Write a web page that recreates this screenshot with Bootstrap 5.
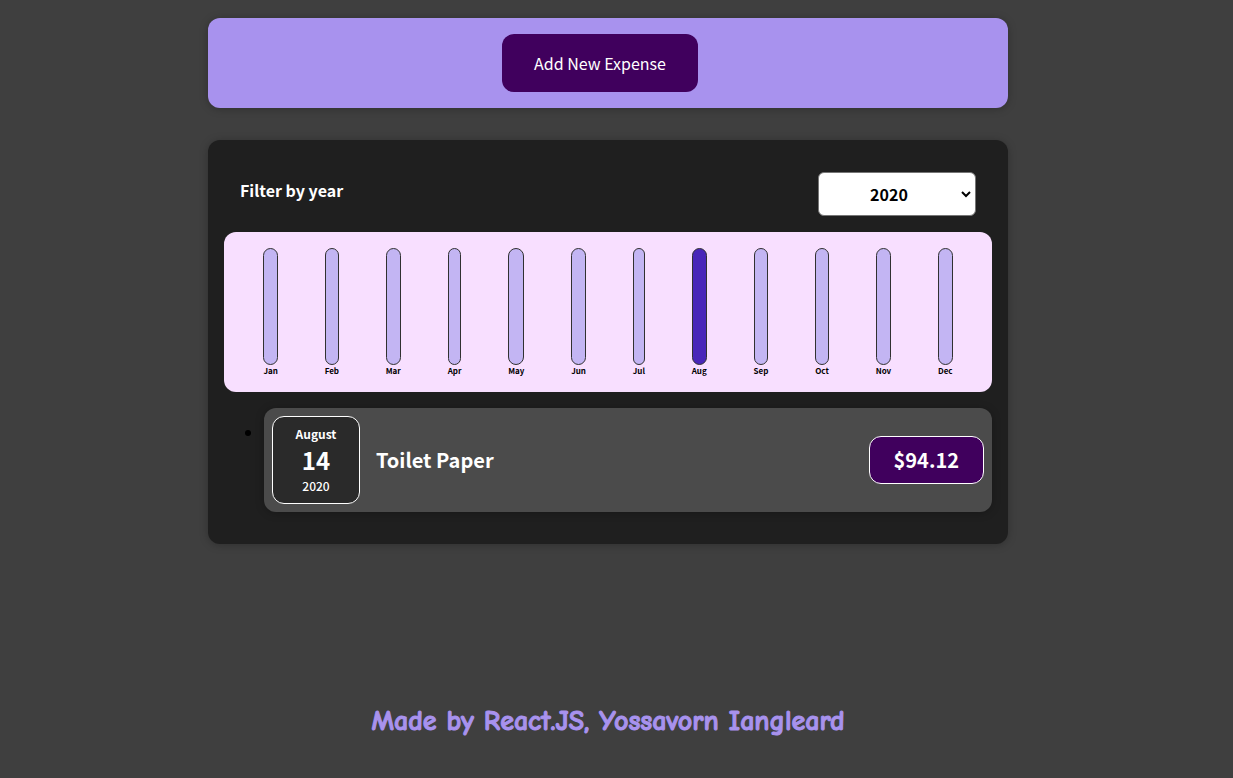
<!DOCTYPE html>
<html lang="en">
<head>
<meta charset="utf-8">
<meta name="viewport" content="width=device-width, initial-scale=1">
<title>Expenses</title>
<link href="https://cdn.jsdelivr.net/npm/bootstrap@5.3.0/dist/css/bootstrap.min.css" rel="stylesheet">
<style>
  body {
    background: #3f3f3f;
    font-family: "Noto Sans CJK JP", "Noto Sans", sans-serif;
    color: #fff;
    padding: 18px 17px 0 0;
  }
  .panel {
    width: 800px;
    max-width: 95%;
    border-radius: 12px;
    box-shadow: 0 1px 8px rgba(0, 0, 0, .25);
  }
  .new-expense { background: #a892ee; }
  .expenses { background: #1f1f1f; margin-top: 32px; }
  .btn-add {
    --bs-btn-color: #fff;
    --bs-btn-bg: #40005d;
    --bs-btn-border-width: 0;
    --bs-btn-hover-color: #fff;
    --bs-btn-hover-bg: #510674;
    --bs-btn-padding-x: 32px;
    --bs-btn-padding-y: 16px;
    --bs-btn-font-size: 16px;
    --bs-btn-border-radius: 12px;
    line-height: 26px;
  }
  .filter-label { font-size: 16px; line-height: 26px; font-weight: 700; }
  .year-select {
    width: 158px;
    height: 44px;
    padding: 8px 16px 8px 0;
    border: 1px solid #767676;
    border-radius: 6px;
    font-size: 16px;
    line-height: 26px;
    font-weight: 700;
    text-align: center;
    text-align-last: center;
    color: #000;
    background: #fff url("data:image/svg+xml,%3Csvg xmlns='http://www.w3.org/2000/svg' viewBox='0 0 10 7'%3E%3Cpath d='M1 1l4 4 4-4' fill='none' stroke='%23000' stroke-width='2'/%3E%3C/svg%3E") no-repeat right 4px center / 10px 7px;
  }
  .chart { background: #f8dfff; border-radius: 12px; height: 160px; }
  .month { font-size: 8px; line-height: 11px; font-weight: 700; color: #000; }
  .bar { background: #c3b5f3; border: 1px solid #313131; border-radius: 12px; }
  .bar-full { background: #4826b9; }
  .expense-list { padding-left: 40px; color: #000; }
  .expense-item {
    background: #4b4b4b;
    border-radius: 12px;
    box-shadow: 0 1px 8px rgba(0, 0, 0, .25);
    color: #fff;
  }
  .date-box {
    width: 88px;
    height: 88px;
    background: #2a2a2a;
    border: 1px solid #fff;
    border-radius: 12px;
    font-size: 12px;
    line-height: 20px;
  }
  .date-day { font-size: 24px; line-height: 32px; }
  .item-title { font-size: 20px; line-height: 32px; font-weight: 700; }
  .price {
    background: #40005d;
    border: 1px solid #fff;
    border-radius: 12px;
    padding: 7px 24px;
    font-size: 20px;
    line-height: 32px;
    font-weight: 700;
  }
  .credit {
    font-family: "Comic Sans MS", "Comic Neue", "DejaVu Sans", sans-serif;
    font-size: 28px;
    line-height: 34px;
    font-weight: 700;
    -webkit-text-stroke: 1px #a892ee;
    color: #a892ee;
    margin-top: 160px;
  }
</style>
</head>
<body>
<section class="panel new-expense mx-auto p-3 text-center">
  <button type="button" class="btn btn-add me-3">Add New Expense</button>
</section>

<main class="panel expenses mx-auto p-3">
  <div class="d-flex justify-content-between align-items-center px-3 pt-3">
    <label class="filter-label mb-2" for="year">Filter by year</label>
    <select id="year" class="year-select form-select">
      <option>2022</option><option>2021</option><option selected>2020</option><option>2019</option>
    </select>
  </div>

  <div class="chart d-flex justify-content-around p-3 mt-3">
    <div class="month d-flex flex-column align-items-center"><div class="bar w-100 flex-grow-1"></div>Jan</div>
    <div class="month d-flex flex-column align-items-center"><div class="bar w-100 flex-grow-1"></div>Feb</div>
    <div class="month d-flex flex-column align-items-center"><div class="bar w-100 flex-grow-1"></div>Mar</div>
    <div class="month d-flex flex-column align-items-center"><div class="bar w-100 flex-grow-1"></div>Apr</div>
    <div class="month d-flex flex-column align-items-center"><div class="bar w-100 flex-grow-1"></div>May</div>
    <div class="month d-flex flex-column align-items-center"><div class="bar w-100 flex-grow-1"></div>Jun</div>
    <div class="month d-flex flex-column align-items-center"><div class="bar w-100 flex-grow-1"></div>Jul</div>
    <div class="month d-flex flex-column align-items-center"><div class="bar bar-full w-100 flex-grow-1"></div>Aug</div>
    <div class="month d-flex flex-column align-items-center"><div class="bar w-100 flex-grow-1"></div>Sep</div>
    <div class="month d-flex flex-column align-items-center"><div class="bar w-100 flex-grow-1"></div>Oct</div>
    <div class="month d-flex flex-column align-items-center"><div class="bar w-100 flex-grow-1"></div>Nov</div>
    <div class="month d-flex flex-column align-items-center"><div class="bar w-100 flex-grow-1"></div>Dec</div>
  </div>

  <ul class="expense-list my-3">
    <li>
      <div class="expense-item d-flex align-items-center gap-3 p-2">
        <div class="date-box d-flex flex-column align-items-center justify-content-center">
          <div class="fw-bold">August</div>
          <div class="date-day fw-bold">14</div>
          <div class="fw-medium">2020</div>
        </div>
        <h2 class="item-title flex-grow-1 m-0">Toilet Paper</h2>
        <div class="price">$94.12</div>
      </div>
    </li>
  </ul>
</main>

<footer class="credit text-center">Made by React.JS, Yossavorn Iangleard</footer>
<script src="https://cdn.jsdelivr.net/npm/bootstrap@5.3.0/dist/js/bootstrap.bundle.min.js"></script>
</body>
</html>
